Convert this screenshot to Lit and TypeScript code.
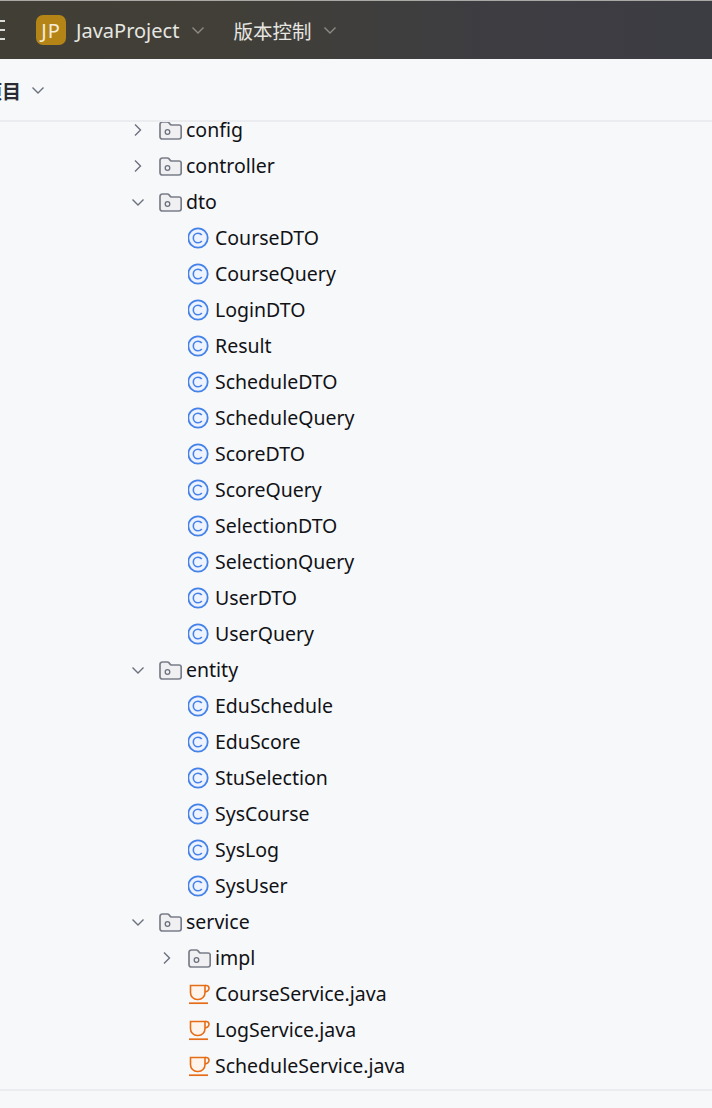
import { LitElement, html, css, svg } from 'lit';
import { customElement } from 'lit/decorators.js';

type Kind = 'folder' | 'class' | 'java';
interface Row {
    name: string;
    kind: Kind;
    depth: number;
    open?: boolean;
}

const row = (name: string, kind: Kind, depth: number, open?: boolean): Row => ({ name, kind, depth, open });

const ROWS: Row[] = [
    row('config', 'folder', 0, false),
    row('controller', 'folder', 0, false),
    row('dto', 'folder', 0, true),
    ...['CourseDTO', 'CourseQuery', 'LoginDTO', 'Result', 'ScheduleDTO', 'ScheduleQuery', 'ScoreDTO', 'ScoreQuery', 'SelectionDTO', 'SelectionQuery', 'UserDTO', 'UserQuery']
        .map((n) => row(n, 'class', 1)),
    row('entity', 'folder', 0, true),
    ...['EduSchedule', 'EduScore', 'StuSelection', 'SysCourse', 'SysLog', 'SysUser'].map((n) => row(n, 'class', 1)),
    row('service', 'folder', 0, true),
    row('impl', 'folder', 1, false),
    ...['CourseService.java', 'LogService.java', 'ScheduleService.java'].map((n) => row(n, 'java', 1)),
];

const chevronDown = html`<svg class="chev" width="14" height="14" viewBox="0 0 14 14"><path d="M1.5 4.5 7 10l5.5-5.5" fill="none" stroke="currentColor" stroke-width="1.4"/></svg>`;
const chevronRight = html`<svg class="chev" width="14" height="14" viewBox="0 0 14 14"><path d="M4 1.5 9.5 7 4 12.5" fill="none" stroke="currentColor" stroke-width="1.4"/></svg>`;

const ICONS: Record<Kind, unknown> = {
    folder: svg`<svg width="23" height="20" viewBox="0 -1 23 20" fill="none">
      <path d="M1 3.5c0-1.500 1-2.500 2.500-2.500h4.800c.8 0 1.300.3 1.800.9l1.200 1.500c.4.4.8.6 1.400.6h7.300c1.300 0 2.200.9 2.200 2.200v9.500c0 1.400-.9 2.300-2.300 2.300H3.300C1.900 18 1 17.100 1 15.700z" fill="#f0f0f3" stroke="#7a7d88" stroke-width="1.700"/>
      <circle cx="8.500" cy="11" r="2.300" stroke="#6c707e" stroke-width="1.300"/>
    </svg>`,
    class: svg`<svg width="22" height="22" viewBox="1 0 22 22" fill="none">
      <circle cx="11" cy="11" r="9.700" fill="#edf3ff" stroke="#4682e8" stroke-width="1.800"/>
      <path d="M14.800 8.100A4.800 4.800 0 0 0 11 6.300a4.700 4.700 0 0 0 0 9.400 4.800 4.800 0 0 0 3.800-1.800" stroke="#4682e8" stroke-width="1.600"/>
    </svg>`,
    java: svg`<svg width="23" height="22" viewBox="0 0 23 22" fill="none">
      <path d="M2.500 2.500h14.500v7.200a6.800 6.800 0 0 1-6.800 6.800H9.300a6.800 6.800 0 0 1-6.800-6.800z" fill="#fff4eb" stroke="#e66d17" stroke-width="1.600"/>
      <path d="M17 2.500h1.200a2.800 2.800 0 0 1 2.800 2.800 3.400 3.400 0 0 1-4 3.300" stroke="#e66d17" stroke-width="1.600"/>
      <path d="M1 20.200h19" stroke="#e66d17" stroke-width="1.700"/>
    </svg>`,
};

@customElement('app-root')
export class AppRoot extends LitElement {
    static styles = css`
    :host {
      display: block;
      height: 1108px;
      overflow: hidden;
      background: #f7f8fa;
      font-family: "Noto Sans", "Noto Sans CJK SC", sans-serif;
      color: #111216;
    }

    .titlebar {
      height: 59px;
      box-sizing: border-box;
      border-top: 1px solid #a9a8a4;
      background: linear-gradient(90deg, #403e35 0%, #413f37 30%, #3d3d42 70%, #3c3c43 100%);
      display: flex;
      align-items: center;
      color: #e6e6e2;
      font-size: 20px;
    }
    .menu {
      width: 36px;
      flex: none;
      display: flex;
      flex-direction: column;
      gap: 7px;
    }
    .menu i {
      width: 5px;
      height: 2px;
      background: #dcdcd8;
    }
    .logo {
      width: 30px;
      height: 30px;
      flex: none;
      border-radius: 7px;
      background: #b58417;
      color: #f4ecd8;
      font-size: 20px;
      letter-spacing: 1px;
      display: flex;
      align-items: center;
      justify-content: center;
      margin-right: 10px;
    }
    .titlebar .chev {
      color: #8c8b86;
      margin-left: 12px;
    }
    .vcs {
      margin-left: 28px;
      font-size: 19.5px;
    }

    .subbar {
      height: 63px;
      box-sizing: border-box;
      border-bottom: 2px solid #ebecf0;
      display: flex;
      align-items: center;
      font-size: 19px;
      font-weight: 700;
      color: #2a2c33;
    }
    .crop {
      width: 21px;
      overflow: hidden;
      direction: rtl;
      white-space: nowrap;
      padding-top: 2px;
    }
    .subbar .chev {
      color: #6c707e;
      margin-left: 10px;
    }

    .tree {
      height: 969px;
      overflow: hidden;
      border-bottom: 2px solid #ebecf0;
      box-sizing: border-box;
    }
    .rows {
      margin-top: -10px;
      font-size: 19.5px;
      padding-left: 131px;
    }
    .row {
      height: 36px;
      display: flex;
      align-items: center;
      padding-left: calc(var(--depth) * 29px);
    }
    .arrow {
      width: 14px;
      height: 14px;
      flex: none;
      margin-right: 14px;
      color: #6c707e;
      display: flex;
    }
    .icon {
      width: 27px;
      height: 22px;
      flex: none;
      display: flex;
      align-items: center;
    }
    .label {
      padding-bottom: 1px;
    }
    `;

    private renderRow(r: Row) {
        return html`
      <div class="row" style="--depth:${r.depth}">
        <span class="arrow">${r.open === undefined ? '' : r.open ? chevronDown : chevronRight}</span>
        <span class="icon">${ICONS[r.kind]}</span>
        <span class="label">${r.name}</span>
      </div>`;
    }

    render() {
        return html`
      <div class="titlebar">
        <div class="menu"><i></i><i></i><i></i></div>
        <div class="logo">JP</div>
        <span>JavaProject</span>${chevronDown}
        <span class="vcs">版本控制</span>${chevronDown}
      </div>
      <div class="subbar">
        <span class="crop">项目</span>${chevronDown}
      </div>
      <div class="tree">
        <div class="rows">${ROWS.map((r) => this.renderRow(r))}</div>
      </div>
    `;
    }
}
